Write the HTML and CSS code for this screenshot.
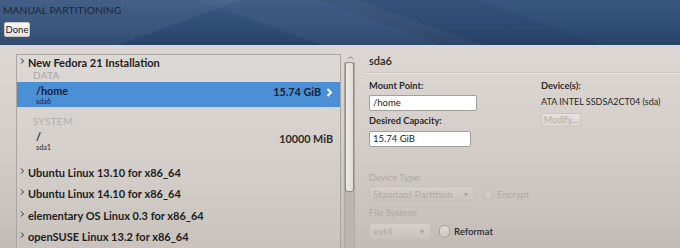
FILE: index.html
```html
<!DOCTYPE html>
<html>
<head>
<meta charset="utf-8">
<link rel="stylesheet" href="styles.css">
</head>
<body>
<div class="app">
  <header class="hdr">
    <div class="title">MANUAL PARTITIONING</div>
    <button class="done">Done</button>
  </header>
  <main class="main">
    <section class="left">
      <div class="listbox">
        <div class="group first"><svg class="arrow" width="5" height="6" viewBox="0 0 5 6"><path d="M1 0.5 L3.5 3 L1 5.5" fill="none" stroke="#2a2a2a" stroke-width="1"/></svg><span>New Fedora 21 Installation</span></div>
        <div class="cat">DATA</div>
        <div class="row sel">
          <div class="names"><div class="mp">/home</div><div class="dev">sda6</div></div>
          <div class="size">15.74 GiB</div>
          <svg class="chev" width="7" height="9" viewBox="0 0 7 9"><path d="M1.5 1 L5 4.5 L1.5 8" fill="none" stroke="#ffffff" stroke-width="2"/></svg>
        </div>
        <div class="cat sys">SYSTEM</div>
        <div class="row tall">
          <div class="names"><div class="mp">/</div><div class="dev">sda1</div></div>
          <div class="size plain">10000 MiB</div>
        </div>
        <div class="group"><svg class="arrow" width="5" height="6" viewBox="0 0 5 6"><path d="M1 0.5 L3.5 3 L1 5.5" fill="none" stroke="#2a2a2a" stroke-width="1"/></svg><span>Ubuntu Linux 13.10 for x86_64</span></div>
        <div class="group"><svg class="arrow" width="5" height="6" viewBox="0 0 5 6"><path d="M1 0.5 L3.5 3 L1 5.5" fill="none" stroke="#2a2a2a" stroke-width="1"/></svg><span>Ubuntu Linux 14.10 for x86_64</span></div>
        <div class="group"><svg class="arrow" width="5" height="6" viewBox="0 0 5 6"><path d="M1 0.5 L3.5 3 L1 5.5" fill="none" stroke="#2a2a2a" stroke-width="1"/></svg><span>elementary OS Linux 0.3 for x86_64</span></div>
        <div class="group"><svg class="arrow" width="5" height="6" viewBox="0 0 5 6"><path d="M1 0.5 L3.5 3 L1 5.5" fill="none" stroke="#2a2a2a" stroke-width="1"/></svg><span>openSUSE Linux 13.2 for x86_64</span></div>
      </div>
      <div class="scroll">
        <svg class="up" width="7" height="5" viewBox="0 0 7 5"><path d="M1 4 L3.5 1.5 L6 4" fill="none" stroke="#8a8682" stroke-width="1"/></svg>
        <div class="trough"><div class="thumb"></div></div>
      </div>
    </section>
    <section class="right">
      <div class="devname">sda6</div>
      <div class="sep"></div>
      <div class="cols">
        <div class="col1">
          <div class="lbl">Mount Point:</div>
          <div class="input w1">/home</div>
          <div class="lbl">Desired Capacity:</div>
          <div class="input w2">15.74 GiB</div>
          <div class="lbl dis gap">Device Type:</div>
          <div class="line l1">
            <div class="select s1"><span>Standard Partition</span><span class="caret">▾</span></div>
            <div class="check dis"><span class="box"></span><span>Encrypt</span></div>
          </div>
          <div class="lbl dis">File System:</div>
          <div class="line l2">
            <div class="select s2"><span>ext4</span><span class="caret">▾</span></div>
            <div class="check on"><span class="box round"></span><span>Reformat</span></div>
          </div>
        </div>
        <div class="col2">
          <div class="lbl">Device(s):</div>
          <div class="devtext">ATA INTEL SSDSA2CT04 (sda)</div>
          <button class="modify">Modify...</button>
        </div>
      </div>
    </section>
  </main>
</div>
</body>
</html>
```
FILE: styles.css
```css
html, body {
  margin: 0;
  padding: 0;
}
body {
  width: 680px;
  height: 248px;
  overflow: hidden;
  font-family: Lato, "Open Sans", "DejaVu Sans", sans-serif;
  color: #2b2b2b;
}
.app {
  width: 680px;
  height: 248px;
  display: flex;
  flex-direction: column;
  overflow: hidden;
  background: linear-gradient(180deg, #dfdbd8 0%, #d6d0cc 50%, #c4bcb7 100%);
}
.hdr {
  height: 45px;
  flex: none;
  box-sizing: border-box;
  padding: 4px 0 0 3px;
  background:
    linear-gradient(160deg, rgba(255,255,255,0.05) 0 30%, transparent 30% 100%),
    linear-gradient(20deg, transparent 0 55%, rgba(0,0,0,0.06) 55% 75%, transparent 75%),
    linear-gradient(200deg, transparent 0 40%, rgba(255,255,255,0.04) 40% 60%, transparent 60%),
    linear-gradient(180deg, #3a5780 0%, #304d76 60%, #284369 100%);
  display: flex;
  flex-direction: column;
  align-items: flex-start;
}
.title {
  font-size: 10.2px;
  line-height: 12px;
  letter-spacing: 0.1px;
  color: #1a2637;
  font-weight: 400;
}
.done {
  margin: 6px 0 0 1px;
  width: 26px;
  height: 15px;
  padding: 0;
  border: 1px solid #c9c6c2;
  border-radius: 2px;
  background: linear-gradient(#f8f7f6, #e6e3e0);
  font-family: inherit;
  font-size: 9.5px;
  color: #222;
  line-height: 12px;
}
.main {
  flex: 1;
  display: flex;
  min-height: 0;
  overflow: hidden;
}
.left {
  width: 360px;
  flex: none;
  display: flex;
  padding: 9px 0 0 16px;
  box-sizing: border-box;
}
.listbox {
  width: 325px;
  box-sizing: border-box;
  border: 1px solid #a9a5a1;
  border-bottom: none;
  background: linear-gradient(180deg, #dcd8d5 0%, #d3cec9 60%, #c9c2bd 100%);
}
.group {
  display: flex;
  align-items: center;
  height: 21.33px;
  font-size: 11px;
  font-weight: 700;
  color: #1d1d1d;
  padding-left: 3px;
}
.group.first {
  height: 14px;
}
.arrow {
  align-self: flex-start;
  margin: 6px 3px 0 0;
  flex: none;
}
.group.first .arrow {
  margin-top: 3px;
}
.cat {
  height: 13px;
  padding-left: 16px;
  font-size: 10px;
  line-height: 13px;
  color: #aaa6a2;
  letter-spacing: 0.3px;
}
.cat.sys {
  margin-top: 8px;
  color: #b3aeaa;
}
.row {
  display: flex;
  align-items: flex-start;
  height: 25px;
  box-sizing: border-box;
  padding: 3px 0 0 19px;
}
.row.tall {
  height: 34px;
}
.row.sel {
  background: #4b8fd7;
  color: #132238;
}
.names {
  flex: 1;
}
.mp {
  font-size: 10.8px;
  font-weight: 700;
  line-height: 12px;
}
.dev {
  font-size: 7.3px;
  line-height: 9px;
}
.size {
  font-size: 10.8px;
  font-weight: 700;
  line-height: 12px;
  margin: 1px 5px 0 0;
}
.size.plain {
  margin: 2px 7px 0 0;
}
.chev {
  margin: 3px 7px 0 0;
}
.scroll {
  width: 16px;
  flex: none;
  display: flex;
  flex-direction: column;
  align-items: center;
}
.up {
  margin: 1px 0 2px 2px;
}
.trough {
  width: 11px;
  flex: 1;
  background: #bcb5b0;
  border-left: 1px solid #aea8a3;
  border-right: 1px solid #aea8a3;
  box-sizing: border-box;
}
.thumb {
  height: 130px;
  width: 9px;
  box-sizing: border-box;
  border: 1px solid #8f8a86;
  border-radius: 3px;
  background: linear-gradient(90deg, #ebe8e5, #dfdbd8);
}
.right {
  flex: 1;
  padding-top: 9px;
  box-sizing: border-box;
}
.devname {
  font-size: 11px;
  font-weight: 600;
  color: #262626;
  padding-left: 9px;
  line-height: 14px;
}
.sep {
  margin: 4px 0 0 5px;
  height: 1px;
  background: #c9c5c1;
  border-bottom: 1px solid #e9e6e3;
}
.cols {
  display: flex;
  padding: 6px 0 0 9px;
}
.col1 {
  width: 171px;
  flex: none;
}
.lbl {
  font-size: 9.3px;
  font-weight: 700;
  color: #2b2b2b;
  line-height: 12px;
}
.lbl.dis {
  color: #aea8a3;
  font-weight: 400;
}
.lbl.gap {
  margin-top: 25px;
}
.input {
  height: 16px;
  box-sizing: border-box;
  border: 1px solid #a29e9a;
  border-radius: 2px;
  background: #fff;
  font-size: 9.5px;
  line-height: 14px;
  padding-left: 3px;
  color: #222;
}
.w1 { width: 108px; margin: 3px 0 4px; }
.w2 { width: 102px; margin: 4px 0 0; }
.line {
  display: flex;
  align-items: center;
}
.l1 { margin: 2px 0 5px; }
.l2 { margin: 4px 0 0; }
.select {
  height: 16px;
  box-sizing: border-box;
  border: 1px solid #c6c0bc;
  border-radius: 3px;
  background: linear-gradient(#d4cfcb, #c9c3bf);
  display: flex;
  align-items: center;
  justify-content: space-between;
  padding: 0 6px 0 3px;
  font-size: 10px;
  color: #b0aaa5;
}
.s1 { width: 106px; }
.s2 { width: 62px; }
.caret {
  font-size: 8px;
  color: #a59f9a;
}
.check {
  display: flex;
  align-items: center;
  margin-left: 8px;
  font-size: 9.5px;
}
.check.dis {
  color: #b0aaa5;
}
.check.on {
  color: #2b2b2b;
  font-weight: 600;
}
.box {
  width: 10px;
  height: 11px;
  box-sizing: border-box;
  border: 1px solid #c0bab6;
  border-radius: 3px;
  background: #d0cac6;
  margin-right: 4px;
}
.box.round {
  width: 11px;
  height: 13px;
  border-radius: 5px;
  border-color: #a8a29e;
  background: linear-gradient(#dcd8d5, #cdc7c3);
}
.col2 {
  display: flex;
  flex-direction: column;
  align-items: flex-start;
  padding-left: 1px;
}
.devtext {
  font-size: 9px;
  line-height: 12px;
  margin-top: 4px;
  color: #262626;
}
.modify {
  margin-top: 5px;
  width: 40px;
  height: 14px;
  padding: 0;
  border: 1px solid #c8c4c0;
  border-radius: 2px;
  background: linear-gradient(#e4e1de, #d8d4d0);
  font-family: inherit;
  font-size: 9px;
  line-height: 12px;
  color: #b4afaa;
}
```
